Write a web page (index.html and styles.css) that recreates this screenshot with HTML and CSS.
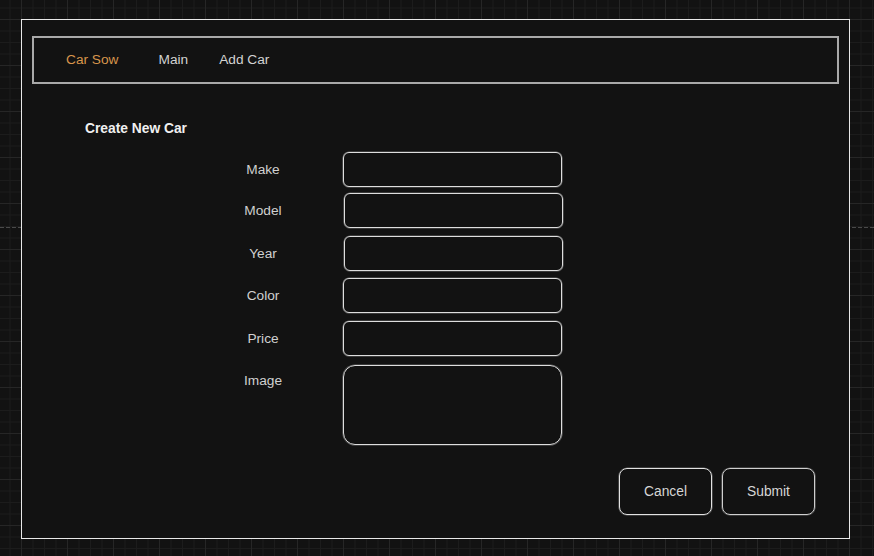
FILE: index.html
```html
<!DOCTYPE html>
<html lang="en">
<head>
<meta charset="utf-8">
<title>Car Sow - Create New Car</title>
<link rel="stylesheet" href="styles.css">
</head>
<body>
<div class="frame">
  <nav class="navbar">
    <a class="nav-link brand">Car Sow</a>
    <a class="nav-link main">Main</a>
    <a class="nav-link">Add Car</a>
  </nav>
  <section class="content">
    <h1 class="title">Create New Car</h1>
    <form class="form">
      <label class="label">Make</label><div class="input"></div>
      <label class="label">Model</label><div class="input shift"></div>
      <label class="label">Year</label><div class="input shift"></div>
      <label class="label">Color</label><div class="input"></div>
      <label class="label">Price</label><div class="input"></div>
      <label class="label label-top">Image</label><div class="input textarea"></div>
    </form>
  </section>
  <div class="actions">
    <button class="btn" type="button">Cancel</button>
    <button class="btn submit" type="button">Submit</button>
  </div>
</div>
</body>
</html>
```
FILE: styles.css
```css
html, body {
  margin: 0;
  padding: 0;
}
body {
  width: 874px;
  height: 556px;
  overflow: hidden;
  font-family: "Liberation Sans", Arial, sans-serif;
  background-color: #121212;
  background-image:
    repeating-linear-gradient(90deg, #4a4a4a 0 4px, transparent 4px 6px),
    linear-gradient(to right, #262626 1px, transparent 1px),
    linear-gradient(to bottom, #262626 1px, transparent 1px),
    linear-gradient(to right, #1c1c1c 1px, transparent 1px),
    linear-gradient(to bottom, #1c1c1c 1px, transparent 1px);
  background-size:
    100% 1px,
    46px 46px,
    46px 46px,
    11.5px 11.5px,
    11.5px 11.5px;
  background-position:
    0 227px,
    21px 19px,
    21px 19px,
    9.5px 7.5px,
    9.5px 7.5px;
  background-repeat: no-repeat, repeat, repeat, repeat, repeat;
  padding: 19px 0 0 21px;
  box-sizing: border-box;
}
.frame {
  width: 829px;
  height: 520px;
  box-sizing: border-box;
  border: 1px solid #e8e8e8;
  background: #121212;
  padding: 16px 10px 0 10px;
  display: flex;
  flex-direction: column;
}
.navbar {
  height: 48px;
  box-sizing: border-box;
  border: 2px solid #a9a9a9;
  display: flex;
  align-items: center;
  padding-left: 32px;
  padding-bottom: 2px;
}
.nav-link {
  font-size: 13.7px;
  color: #d2d2d2;
  margin-right: 31px;
}
.nav-link.brand {
  color: #d8954c;
  margin-right: 40px;
}
.content {
  padding-left: 53px;
}
.title {
  margin: 37px 0 0 0;
  font-size: 13.8px;
  line-height: 16px;
  font-weight: bold;
  color: #f0f0f0;
}
.form {
  margin: 15px 0 0 143px;
  display: grid;
  grid-template-columns: 70px 219px;
  grid-template-rows: 41px 43px 42px 43px 44px 80px;
  column-gap: 45px;
  align-items: start;
}
.label {
  height: 35px;
  display: flex;
  align-items: center;
  justify-content: center;
  font-size: 13.7px;
  color: #d0d0d0;
}
.label-top {
  align-items: flex-start;
  padding-top: 8px;
  box-sizing: border-box;
}
.input {
  height: 35px;
  box-sizing: border-box;
  border: 1px solid #dedede;
  box-shadow: 0 0 0 0.6px rgba(200, 200, 200, 0.45);
  border-radius: 6px;
}
.input.shift {
  margin-left: 1px;
  margin-right: -1px;
}
.input.textarea {
  height: 80px;
  border-radius: 12px;
}
.actions {
  display: flex;
  justify-content: flex-end;
  gap: 10px;
  padding-right: 24px;
  margin-top: 23px;
}
.btn {
  width: 93px;
  height: 47px;
  box-sizing: border-box;
  background: transparent;
  border: 1px solid #e2e2e2;
  box-shadow: 0 0 0 0.6px rgba(200, 200, 200, 0.45);
  border-radius: 8px;
  color: #d6d6d6;
  font-family: "Liberation Sans", Arial, sans-serif;
  font-size: 13.8px;
  padding: 0;
}
.btn.submit {
  border-color: #cfcfcf;
}
```
